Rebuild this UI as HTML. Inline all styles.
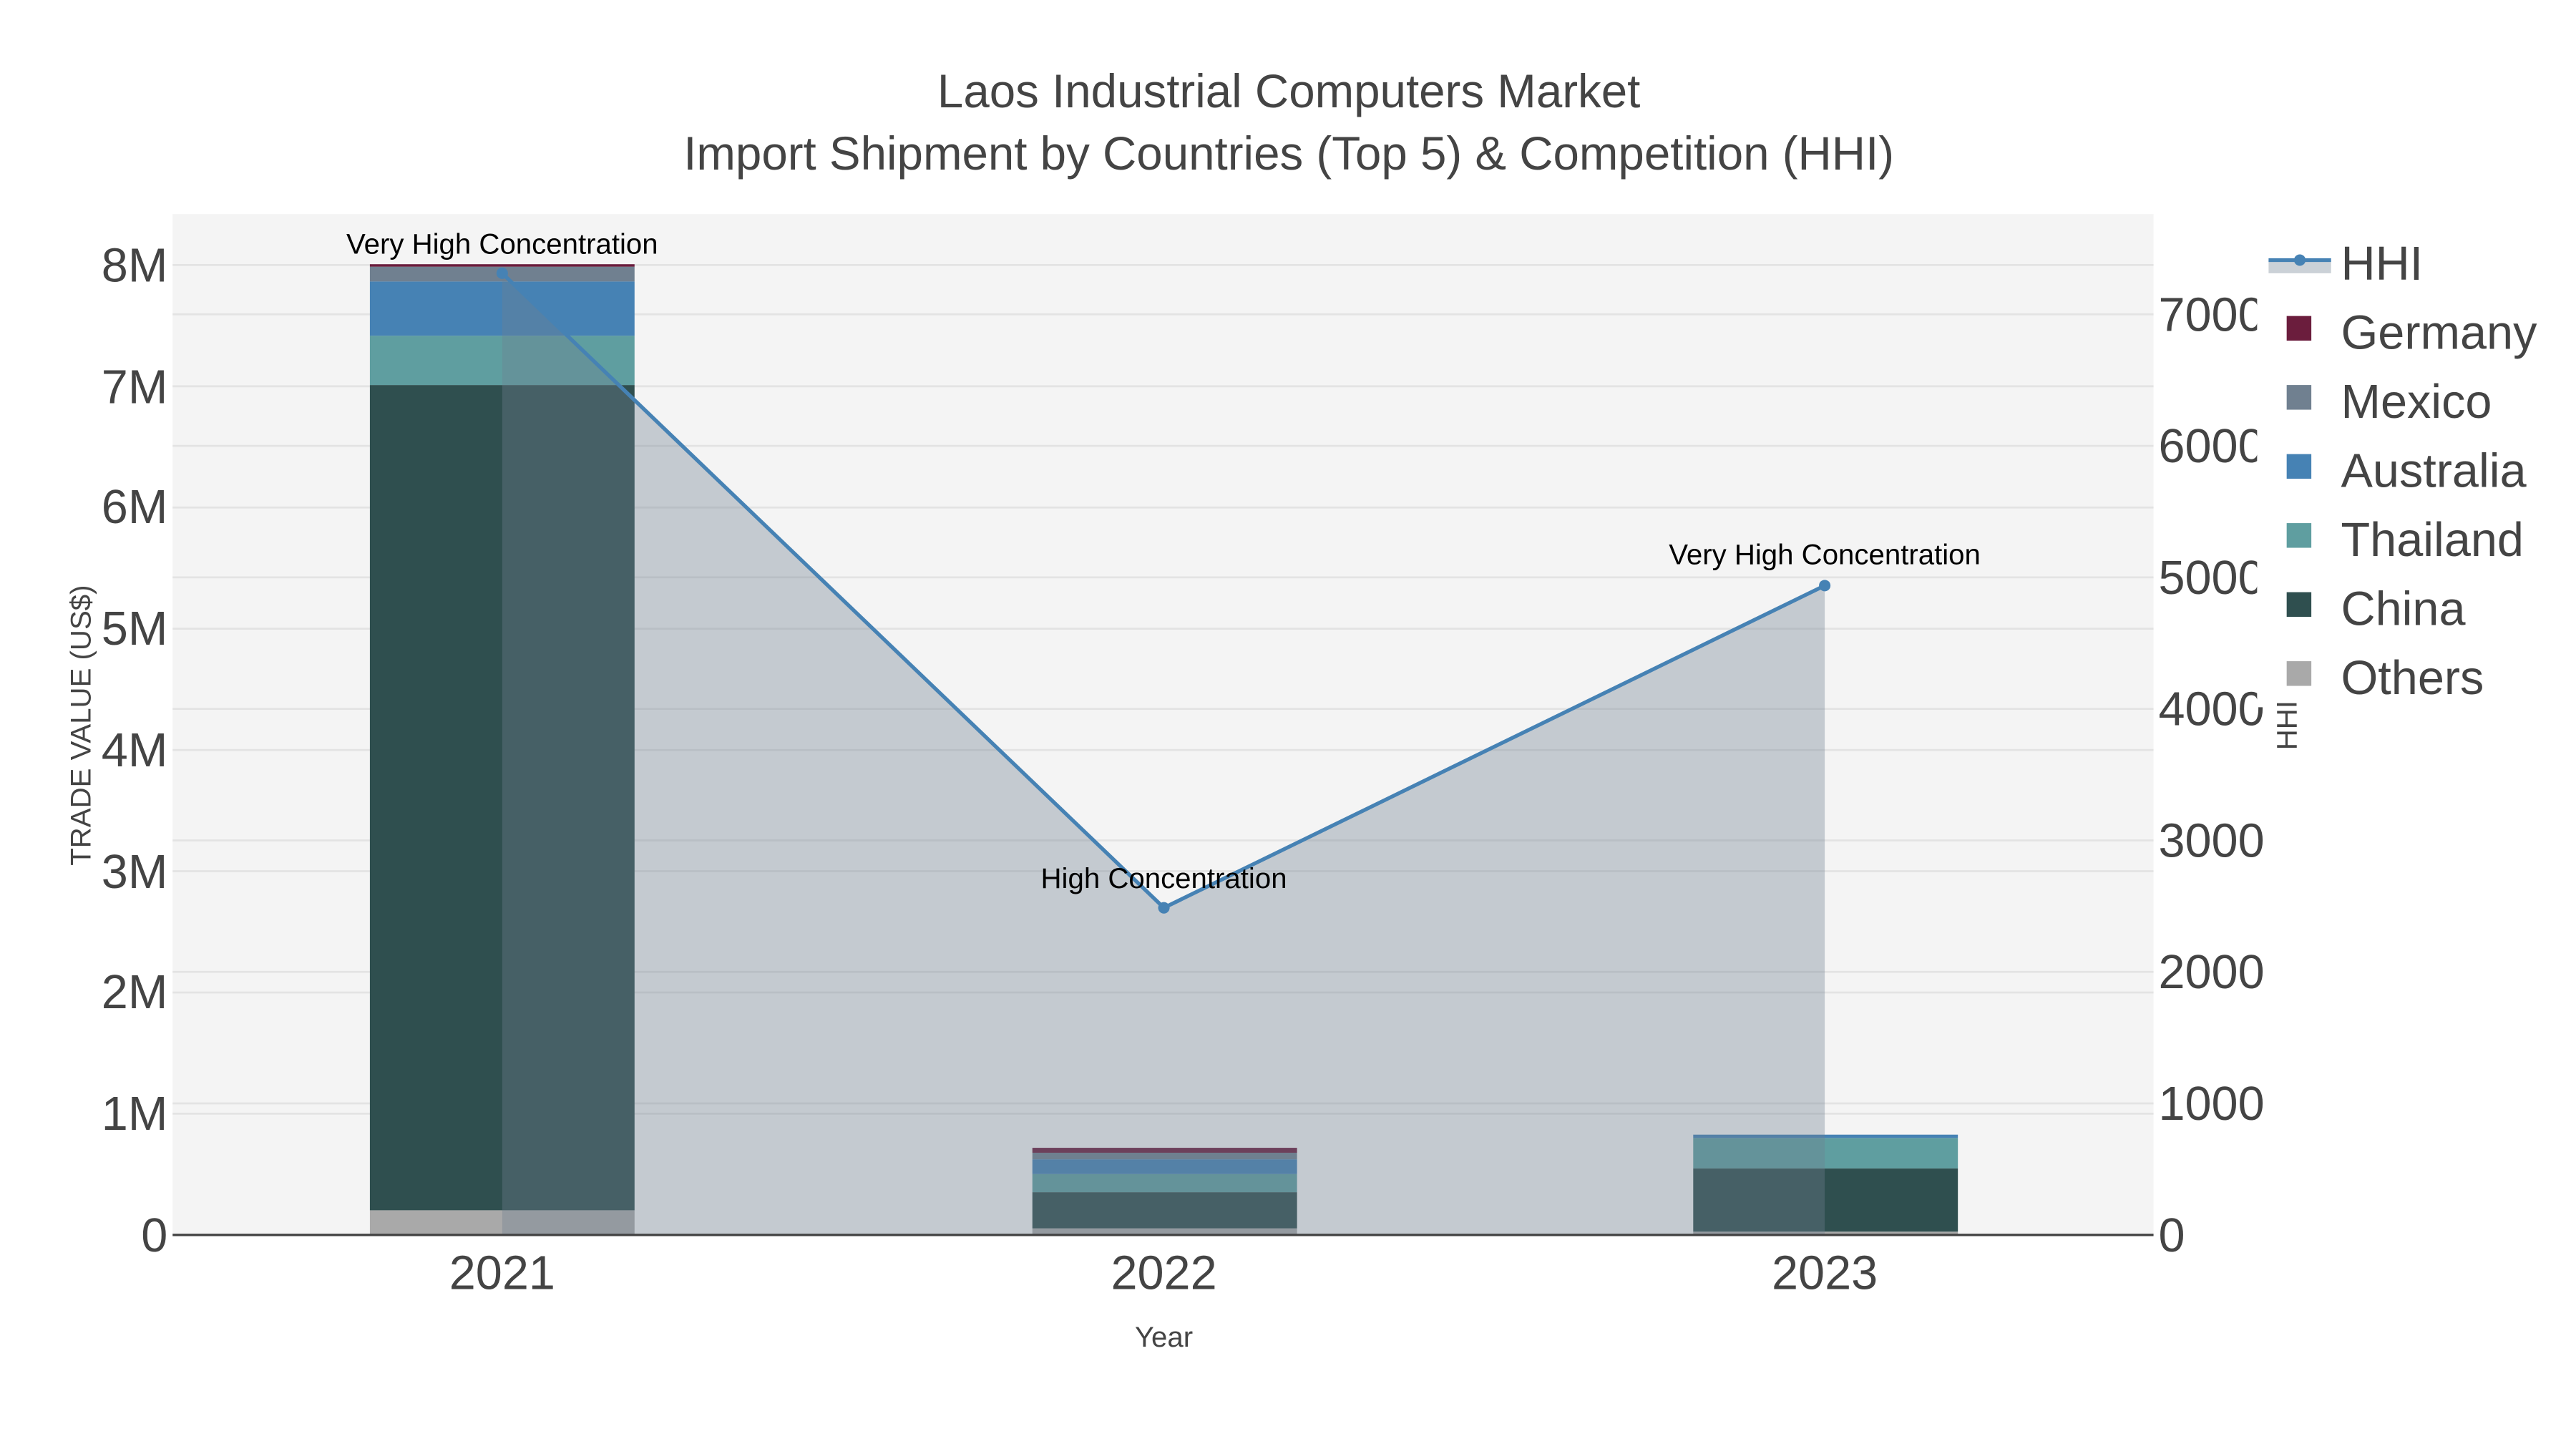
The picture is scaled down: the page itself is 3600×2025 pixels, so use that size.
<!DOCTYPE html>
<html><head><meta charset="utf-8"><style>html,body{margin:0;padding:0;background:#fff}svg{display:block}</style></head>
<body>
<svg width="3600" height="2025" viewBox="0 0 1567 881" xmlns="http://www.w3.org/2000/svg" font-family="Liberation Sans, sans-serif">
<rect width="1567" height="881" fill="#fff"/>
<rect x="105" y="130" width="1205" height="621" fill="#f4f4f4"/>
<g stroke="#e3e3e3" stroke-width="1.2">
<line x1="105" x2="1310" y1="677.25" y2="677.25"/><line x1="105" x2="1310" y1="603.5" y2="603.5"/>
<line x1="105" x2="1310" y1="529.75" y2="529.75"/><line x1="105" x2="1310" y1="456" y2="456"/>
<line x1="105" x2="1310" y1="382.25" y2="382.25"/><line x1="105" x2="1310" y1="308.5" y2="308.5"/>
<line x1="105" x2="1310" y1="234.75" y2="234.75"/><line x1="105" x2="1310" y1="161" y2="161"/>
<line x1="105" x2="1310" y1="671" y2="671"/><line x1="105" x2="1310" y1="591" y2="591"/>
<line x1="105" x2="1310" y1="511" y2="511"/><line x1="105" x2="1310" y1="431" y2="431"/>
<line x1="105" x2="1310" y1="351" y2="351"/><line x1="105" x2="1310" y1="271" y2="271"/>
<line x1="105" x2="1310" y1="191" y2="191"/>
</g>
<rect x="225" y="736" width="161" height="15" fill="#a9a9a9"/>
<rect x="225" y="234" width="161" height="502" fill="#2f4f4f"/>
<rect x="225" y="204" width="161" height="30" fill="#5f9ea0"/>
<rect x="225" y="171" width="161" height="33" fill="#4682b4"/>
<rect x="225" y="162" width="161" height="9" fill="#708090"/>
<rect x="225" y="160.5" width="161" height="1.5" fill="#6b1d3d"/>
<rect x="628" y="747" width="161" height="4" fill="#a9a9a9"/>
<rect x="628" y="725" width="161" height="22" fill="#2f4f4f"/>
<rect x="628" y="714" width="161" height="11" fill="#5f9ea0"/>
<rect x="628" y="705" width="161" height="9" fill="#4682b4"/>
<rect x="628" y="701" width="161" height="4" fill="#708090"/>
<rect x="628" y="698" width="161" height="3" fill="#6b1d3d"/>
<rect x="1030" y="749" width="161" height="2" fill="#a9a9a9"/>
<rect x="1030" y="710.5" width="161" height="38.5" fill="#2f4f4f"/>
<rect x="1030" y="692" width="161" height="18.5" fill="#5f9ea0"/>
<rect x="1030" y="690" width="161" height="2" fill="#4682b4"/>
<polygon points="305.5,166 708,552 1110,356 1110,751 305.5,751" fill="rgba(112,128,144,0.36)"/>
<polyline points="305.5,166 708,552 1110,356" fill="none" stroke="#4682b4" stroke-width="2.3"/>
<circle cx="305.5" cy="166" r="3.5" fill="#4682b4"/><circle cx="708" cy="552" r="3.5" fill="#4682b4"/><circle cx="1110" cy="356" r="3.5" fill="#4682b4"/>
<line x1="105" x2="1310" y1="751" y2="751" stroke="#444" stroke-width="1.5"/>
<g font-size="17.5" fill="#000" text-anchor="middle">
<text x="305.5" y="154">Very High Concentration</text>
<text x="708" y="540">High Concentration</text>
<text x="1110" y="343">Very High Concentration</text>
</g>
<g font-size="28.5" fill="#444" text-anchor="middle">
<text x="784" y="65">Laos Industrial Computers Market</text>
<text x="784" y="103">Import Shipment by Countries (Top 5) &amp; Competition (HHI)</text>
</g>
<g font-size="29" fill="#444" text-anchor="end">
<text x="102" y="761">0</text><text x="102" y="687">1M</text><text x="102" y="613">2M</text>
<text x="102" y="540">3M</text><text x="102" y="466">4M</text><text x="102" y="392">5M</text>
<text x="102" y="318">6M</text><text x="102" y="245">7M</text><text x="102" y="171">8M</text>
</g>
<g font-size="29" fill="#444">
<text x="1313" y="761">0</text><text x="1313" y="681">1000</text><text x="1313" y="601">2000</text>
<text x="1313" y="521">3000</text><text x="1313" y="441">4000</text><text x="1313" y="361">5000</text>
<text x="1313" y="281">6000</text><text x="1313" y="201">7000</text>
</g>
<g font-size="29" fill="#444" text-anchor="middle">
<text x="305.5" y="784">2021</text><text x="708" y="784">2022</text><text x="1110" y="784">2023</text>
</g>
<text x="708" y="819" font-size="17.5" fill="#444" text-anchor="middle">Year</text>
<text transform="translate(55,441) rotate(-90)" font-size="17.5" fill="#444" text-anchor="middle">TRADE VALUE (US$)</text>
<rect x="1373" y="140" width="194" height="290" fill="#fff"/>
<text transform="translate(1397,441) rotate(-90)" font-size="17.5" fill="#444" text-anchor="middle">HHI</text>
<rect x="1380" y="158" width="38" height="8" fill="rgba(112,128,144,0.36)"/>
<line x1="1380" x2="1418" y1="158" y2="158" stroke="#4682b4" stroke-width="2.3"/>
<circle cx="1399" cy="158" r="3.5" fill="#4682b4"/>
<rect x="1391" y="192" width="15" height="15" fill="#6b1d3d"/>
<rect x="1391" y="234" width="15" height="15" fill="#708090"/>
<rect x="1391" y="276" width="15" height="15" fill="#4682b4"/>
<rect x="1391" y="318" width="15" height="15" fill="#5f9ea0"/>
<rect x="1391" y="360" width="15" height="15" fill="#2f4f4f"/>
<rect x="1391" y="402" width="15" height="15" fill="#a9a9a9"/>
<g font-size="29" fill="#444">
<text x="1424" y="170">HHI</text><text x="1424" y="212">Germany</text><text x="1424" y="254">Mexico</text>
<text x="1424" y="296">Australia</text><text x="1424" y="338">Thailand</text><text x="1424" y="380">China</text>
<text x="1424" y="422">Others</text>
</g>
</svg>
</body></html>
